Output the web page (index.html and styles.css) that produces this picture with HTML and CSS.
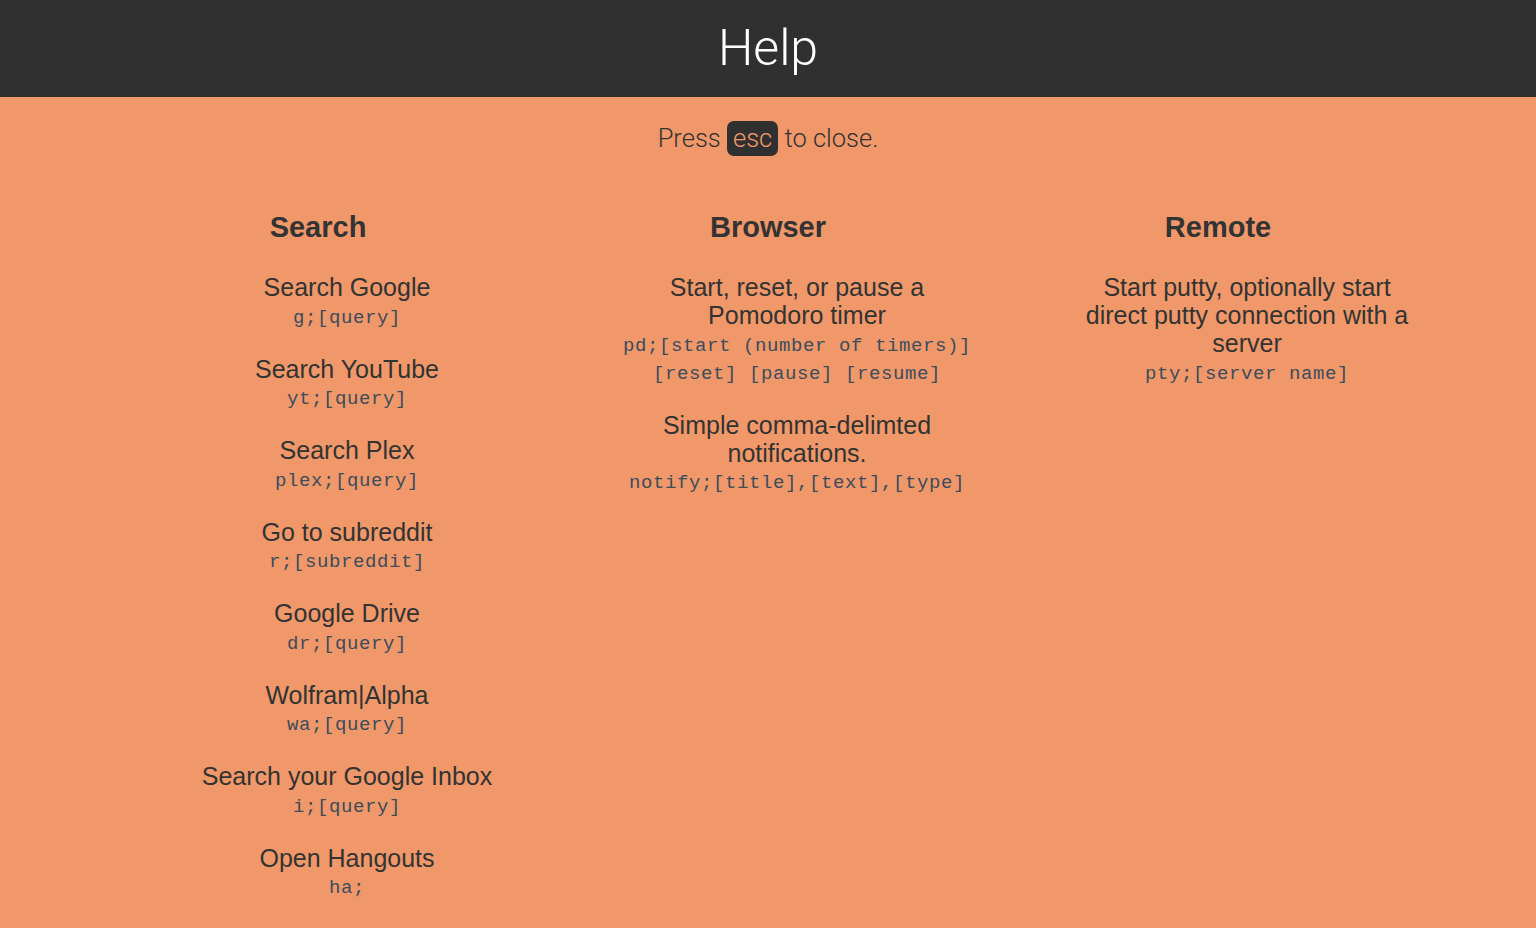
FILE: index.html
```html
<!DOCTYPE html>
<html lang="en">
<head>
<meta charset="utf-8">
<title>Help</title>
<link rel="stylesheet" href="styles.css">
</head>
<body>
<header class="topbar"><h1 class="title">Help</h1></header>
<p class="hint">Press <span class="key">esc</span> to close.</p>
<main class="columns">
  <section class="col">
    <h2 class="col-title">Search</h2>
    <ul class="cmds">
      <li class="cmd"><div class="cmd-name">Search Google</div><code class="cmd-code">g;[query]</code></li>
      <li class="cmd"><div class="cmd-name">Search YouTube</div><code class="cmd-code">yt;[query]</code></li>
      <li class="cmd"><div class="cmd-name">Search Plex</div><code class="cmd-code">plex;[query]</code></li>
      <li class="cmd"><div class="cmd-name">Go to subreddit</div><code class="cmd-code">r;[subreddit]</code></li>
      <li class="cmd"><div class="cmd-name">Google Drive</div><code class="cmd-code">dr;[query]</code></li>
      <li class="cmd"><div class="cmd-name">Wolfram|Alpha</div><code class="cmd-code">wa;[query]</code></li>
      <li class="cmd"><div class="cmd-name">Search your Google Inbox</div><code class="cmd-code">i;[query]</code></li>
      <li class="cmd"><div class="cmd-name">Open Hangouts</div><code class="cmd-code">ha;</code></li>
    </ul>
  </section>
  <section class="col">
    <h2 class="col-title">Browser</h2>
    <ul class="cmds">
      <li class="cmd"><div class="cmd-name">Start, reset, or pause a Pomodoro timer</div><code class="cmd-code">pd;[start (number of timers)] [reset] [pause] [resume]</code></li>
      <li class="cmd"><div class="cmd-name">Simple comma-delimted notifications.</div><code class="cmd-code">notify;[title],[text],[type]</code></li>
    </ul>
  </section>
  <section class="col">
    <h2 class="col-title">Remote</h2>
    <ul class="cmds">
      <li class="cmd"><div class="cmd-name">Start putty, optionally start direct putty connection with a server</div><code class="cmd-code">pty;[server name]</code></li>
    </ul>
  </section>
</main>
</body>
</html>
```
FILE: styles.css
```css
html, body {
  margin: 0;
  padding: 0;
}
body {
  background: #f09869;
  color: #333333;
  font-family: "Liberation Sans", Arial, sans-serif;
  min-height: 928px;
}
.topbar {
  background: #313030;
  height: 97px;
  display: flex;
  align-items: center;
  justify-content: center;
}
.title {
  margin: 0;
  color: #ffffff;
  font-family: Roboto, "Liberation Sans", sans-serif;
  font-weight: 300;
  font-size: 50px;
  line-height: 97px;
}
.hint {
  margin: 24px 0 0;
  text-align: center;
  font-family: Roboto, "Liberation Sans", sans-serif;
  font-weight: 300;
  font-size: 25.5px;
  line-height: 35px;
  color: #333333;
}
.key {
  display: inline-block;
  background: #313030;
  color: #f09869;
  border-radius: 7px;
  padding: 0 6px;
  height: 35px;
  line-height: 35px;
  vertical-align: top;
}
.columns {
  display: grid;
  grid-template-columns: repeat(3, 450px);
  justify-content: center;
  margin-top: 54px;
}
.col-title {
  margin: 0;
  text-align: center;
  font-size: 29px;
  font-weight: bold;
  line-height: 34px;
}
.cmds {
  list-style: none;
  margin: 29px 0 0 79px;
  padding: 0;
  width: 350px;
  text-align: center;
}
.cmd {
  margin-bottom: 23px;
}
.cmd-name {
  font-size: 25px;
  line-height: 28px;
}
.cmd-code {
  display: block;
  margin-top: 2.5px;
  font-family: "Liberation Mono", "Courier New", monospace;
  font-size: 19px;
  letter-spacing: 0.6px;
  line-height: 28px;
  color: #3b4c5c;
}
```
